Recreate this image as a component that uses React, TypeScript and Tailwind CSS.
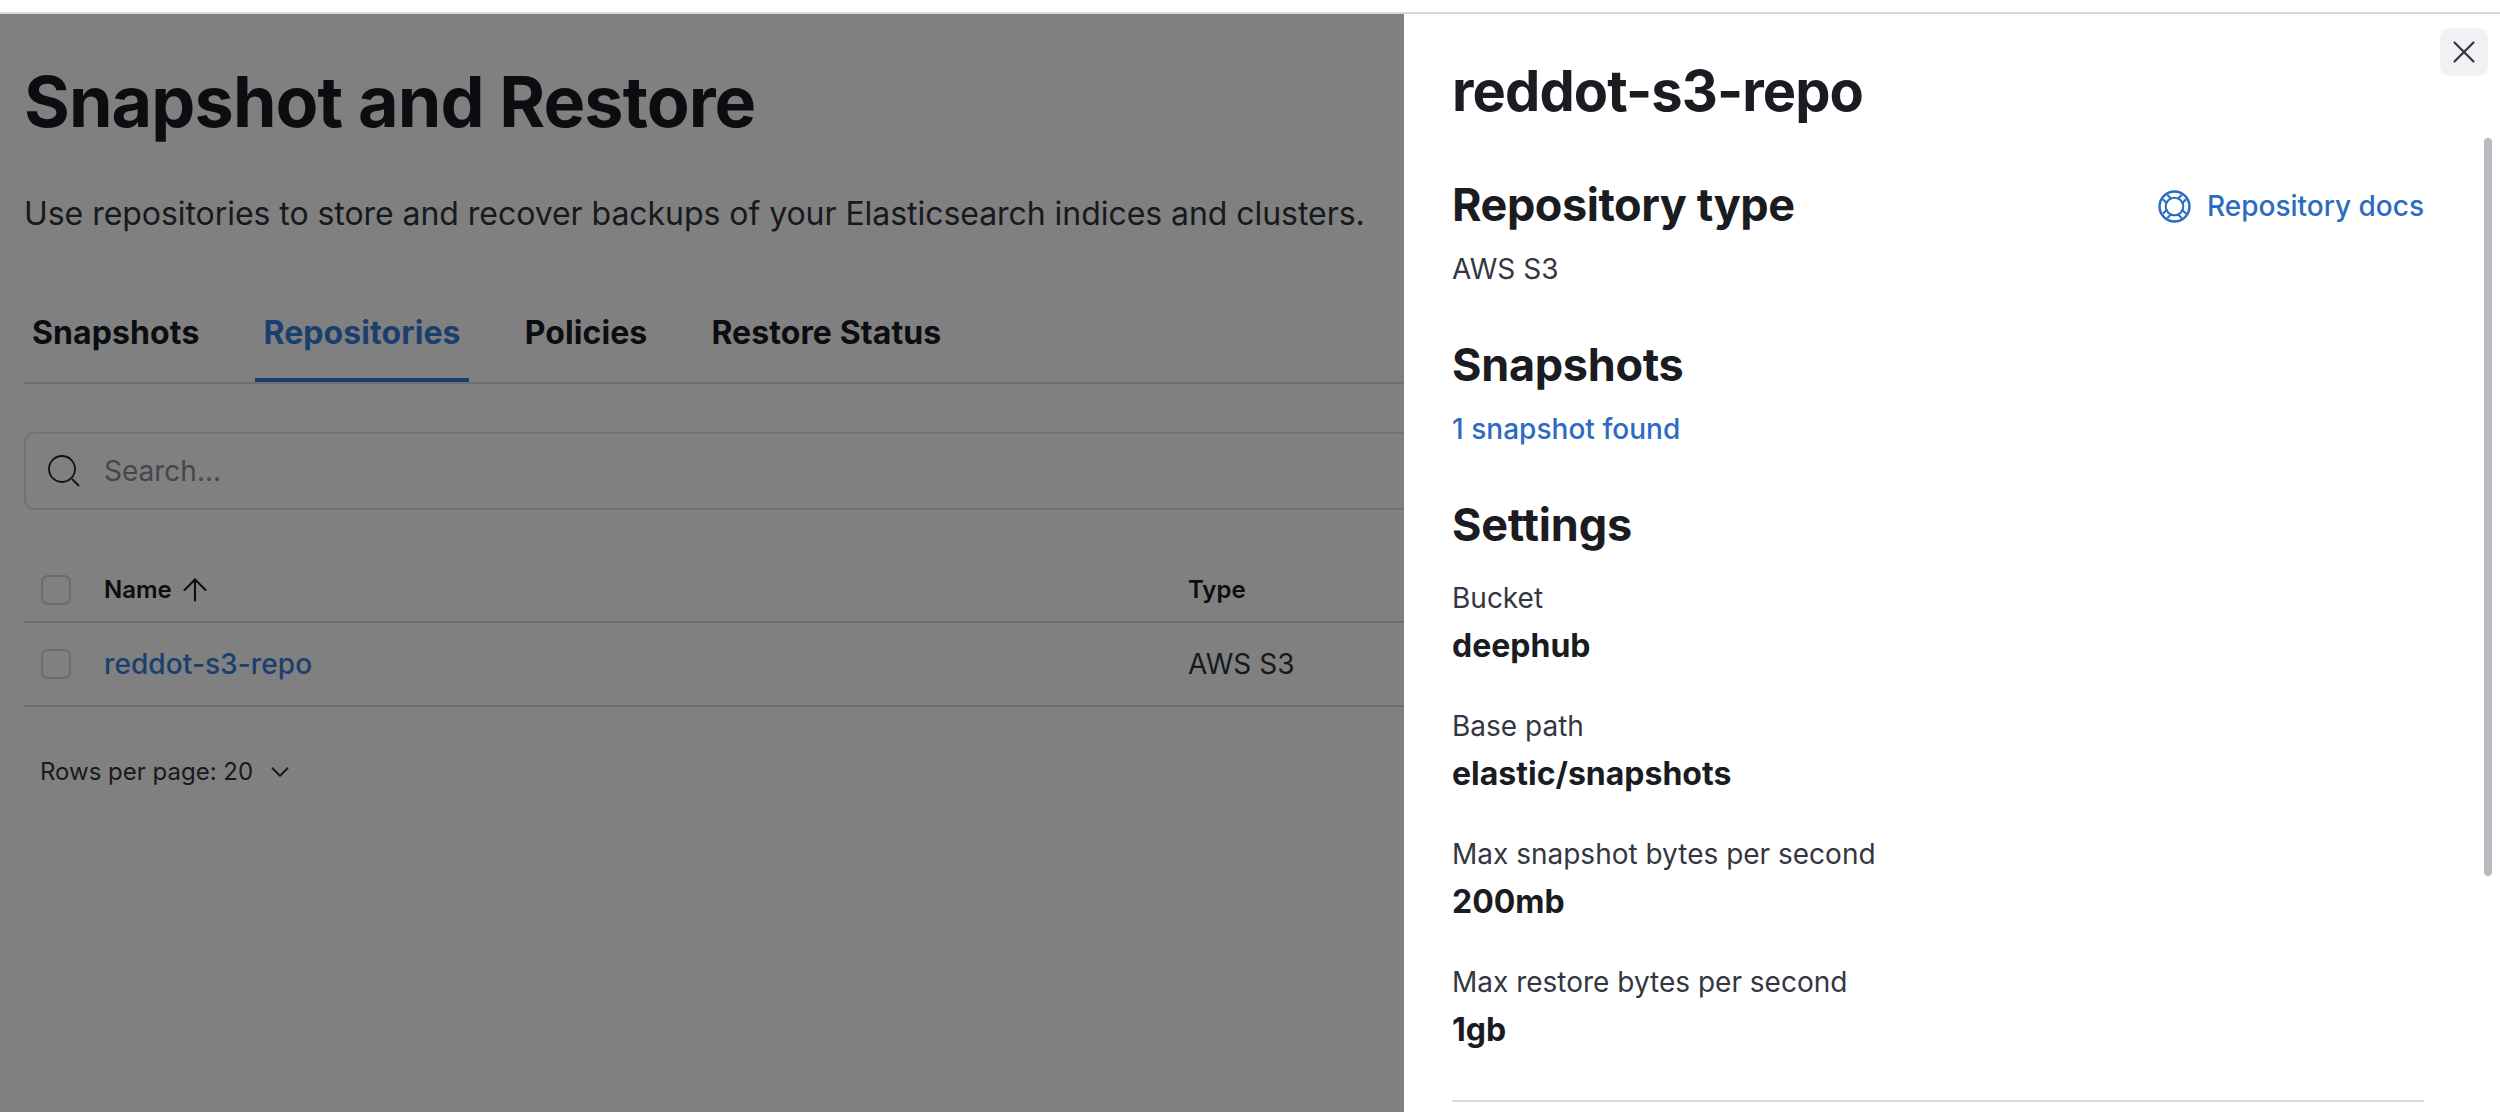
import { ArrowUp, ChevronDown, X } from "lucide-react";

function Checkbox() {
  return <span className="block h-[30px] w-[30px] rounded-[7px] border-2 border-[#6a6c70] bg-[#808080]" />;
}

function Setting({ label, value }: { label: string; value: string }) {
  return (
    <div className="mb-[32px]">
      <p className="text-[28px] leading-[48px] text-[#343741]">{label}</p>
      <p className="text-[32px] font-bold leading-[48px] text-[#1a1c21]">{value}</p>
    </div>
  );
}

function Buoy() {
  return (
    <svg width="33" height="33" viewBox="0 0 32 32" fill="none" stroke="currentColor" strokeWidth="2">
      <circle cx="16" cy="16" r="14.5" strokeWidth="2.4" />
      <circle cx="16" cy="16" r="8.5" />
      {[45, 135, 225, 315].map((a) => (
        <g key={a} transform={`rotate(${a} 16 16)`}>
          <path d="M13 3v6M19 3v6" />
        </g>
      ))}
    </svg>
  );
}

export default function App() {
  return (
    <div className="flex h-[1112px] w-[2500px] flex-col overflow-hidden bg-white font-['Inter',sans-serif]">
      <div className="h-[14px] shrink-0 border-b-2 border-[#d3d7e6] bg-white" />
      <div className="flex min-h-0 flex-1">
        <main className="w-[1404px] shrink-0 bg-[#808080] pl-6">
          <h1 className="mt-[50px] text-[70px] font-bold leading-[76px] tracking-[-0.9px] text-[#0b0d10]">
            Snapshot and Restore
          </h1>
          <p className="mt-[50px] text-[32px] leading-[48px] tracking-[-0.05px] text-[#17191d]">
            Use repositories to store and recover backups of your Elasticsearch indices and clusters.
          </p>
          <nav className="mt-[50px] flex h-[96px] items-stretch gap-[48px] border-b-2 border-[#6c7074]">
            {["Snapshots", "Repositories", "Policies", "Restore Status"].map((t) => (
              <span
                key={t}
                className={`px-2 pt-[21px] text-[32px] font-bold leading-[48px] tracking-[0.1px] ${
                  t === "Repositories" ? "border-b-4 border-[#1a3f6f] text-[#1a3f6f]" : "text-[#0b0d10]"
                }`}
              >
                {t}
              </span>
            ))}
          </nav>
          <div className="mt-[48px] flex h-[78px] items-center gap-[24px] rounded-l-[10px] border-2 border-r-0 border-[#707276] pl-[22px]">
            <svg width="32" height="32" viewBox="0 0 32 32" fill="none" stroke="#0f1114" strokeWidth="1.8">
              <circle cx="14" cy="14" r="13" />
              <path d="M24 24l7 7" />
            </svg>
            <span className="text-[28px] leading-none text-[#45474c]">Search...</span>
          </div>
          <div className="mt-[48px] flex h-[65px] items-center border-b-2 border-[#6c7074] pl-[17px]">
            <Checkbox />
            <div className="ml-[33px] flex w-[1084px] items-center gap-[5px] text-[24px] font-semibold text-[#0b0d10]">
              Name <ArrowUp size={36} strokeWidth={1.4} />
            </div>
            <span className="text-[24px] font-semibold text-[#0b0d10]">Type</span>
          </div>
          <div className="flex h-[84px] items-center border-b-2 border-[#6c7074] pl-[17px]">
            <Checkbox />
            <span className="ml-[33px] w-[1084px] text-[28px] font-medium tracking-[0.1px] text-[#1a3f6f]">
              reddot-s3-repo
            </span>
            <span className="text-[28px] text-[#17191d]">AWS S3</span>
          </div>
          <div className="mt-[47px] flex items-center gap-3 pl-[16px] text-[24px] text-[#17191d]">
            Rows per page: 20 <ChevronDown size={30} strokeWidth={1.5} />
          </div>
        </main>
        <aside className="relative min-w-0 flex-1 overflow-hidden bg-white pl-[48px] pr-[76px]">
          <button className="absolute right-[12px] top-[14px] flex h-12 w-12 items-center justify-center rounded-[10px] bg-[#f1f1f3] text-[#343741]">
            <X size={38} strokeWidth={1.4} />
          </button>
          <div className="absolute right-[8px] top-[124px] h-[738px] w-2 rounded-full bg-[#b8bac0]" />
          <h2 className="mt-[45px] text-[56px] font-bold leading-[64px] tracking-[-0.9px] text-[#1a1c21]">
            reddot-s3-repo
          </h2>
          <div className="mt-[50px] flex items-center justify-between">
            <h3 className="text-[45px] font-bold leading-[64px] tracking-[-0.45px] text-[#1a1c21]">Repository type</h3>
            <span className="flex translate-y-[1px] items-center gap-[16px] text-[28px] font-medium text-[#2b6cc0]">
              <Buoy /> Repository docs
            </span>
          </div>
          <p className="mt-[8px] text-[28px] leading-[48px] text-[#343741]">AWS S3</p>
          <h3 className="mt-[40px] text-[45px] font-bold leading-[64px] tracking-[-0.3px] text-[#1a1c21]">Snapshots</h3>
          <p className="mt-[8px] text-[28px] font-medium leading-[48px] tracking-[0.03px] text-[#2b6cc0]">1 snapshot found</p>
          <h3 className="mt-[40px] text-[45px] font-bold leading-[64px] tracking-[-0.2px] text-[#1a1c21]">Settings</h3>
          <div className="mt-[17px]">
            <Setting label="Bucket" value="deephub" />
            <Setting label="Base path" value="elastic/snapshots" />
            <Setting label="Max snapshot bytes per second" value="200mb" />
            <Setting label="Max restore bytes per second" value="1gb" />
          </div>
          <hr className="mt-[46px] border-t-2 border-[#d3dae6]" />
        </aside>
      </div>
    </div>
  );
}
